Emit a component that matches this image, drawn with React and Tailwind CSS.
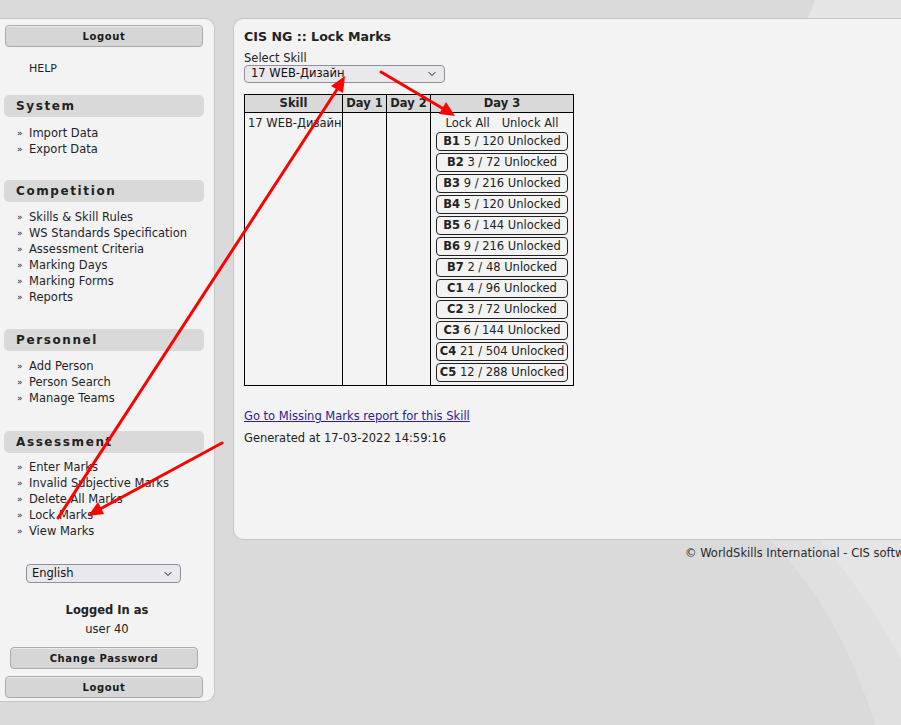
import React from 'react';
import { ChevronDown } from 'lucide-react';

const menu = [
    { title: 'System', items: ['Import Data', 'Export Data'] },
    { title: 'Competition', items: ['Skills & Skill Rules', 'WS Standards Specification', 'Assessment Criteria', 'Marking Days', 'Marking Forms', 'Reports'] },
    { title: 'Personnel', items: ['Add Person', 'Person Search', 'Manage Teams'] },
    { title: 'Assessment', items: ['Enter Marks', 'Invalid Subjective Marks', 'Delete All Marks', 'Lock Marks', 'View Marks'] },
];

const criteria = [
    ['B1', '5 / 120'], ['B2', '3 / 72'], ['B3', '9 / 216'], ['B4', '5 / 120'],
    ['B5', '6 / 144'], ['B6', '9 / 216'], ['B7', '2 / 48'], ['C1', '4 / 96'],
    ['C2', '3 / 72'], ['C3', '6 / 144'], ['C4', '21 / 504'], ['C5', '12 / 288'],
];

const GreyButton = ({ children, className = '' }) => (
    <div className={`h-[22px] flex items-center justify-center rounded-[4px] border border-[#ababab] bg-[#d6d6d6] text-[10px] font-bold tracking-[0.6px] text-[#1a1a1a] shadow-[inset_0_1px_0_#ececec] ${className}`}>
        {children}
    </div>
);

// grey title bar + list of "»" links
const Section = ({ title, items, mt, listMt }) => (
    <div className={mt}>
        <div className="ml-[4px] w-[200px] h-[22px] rounded-[5px] bg-[#d9d9d9] pl-[12px] flex items-center text-[12px] font-bold tracking-[1.6px] text-[#222]">
            {title}
        </div>
        <ul className={`${listMt} pl-[17px]`}>
            {items.map(item => (
                <li key={item} className="flex items-center h-[16px] text-[11.5px] text-[#1f1f2a]">
                    <span className="w-[12px] text-[9px]">»</span>{item}
                </li>
            ))}
        </ul>
    </div>
);

const Swooshes = () => (
    <svg className="absolute inset-0" width="901" height="725" viewBox="0 0 901 725">
        <path d="M 815 0 L 901 0 L 901 18 L 808 18 Z" fill="#ffffff" opacity="0.3" />
        <path d="M 770 540 Q 840 610 875 725 L 901 725 L 901 540 Z" fill="#ffffff" opacity="0.16" />
        <path d="M 820 540 Q 870 600 901 660 L 901 540 Z" fill="#ffffff" opacity="0.18" />
    </svg>
);

const Arrows = () => (
    <svg className="absolute inset-0 pointer-events-none" width="901" height="725" viewBox="0 0 901 725">
        <g stroke="#ff0000" strokeWidth="3" strokeLinecap="round">
            <line x1="222" y1="443" x2="100" y2="509" />
            <line x1="58" y1="518" x2="338" y2="88" />
            <line x1="381" y1="72" x2="442" y2="108" />
        </g>
        <g fill="#ff0000">
            <polygon points="88,516 98,502 104,514" />
            <polygon points="345,76 343,93 331,86" />
            <polygon points="455,116 439,114 446,102" />
        </g>
    </svg>
);

export default function App() {
    return (
        <div className="relative w-[901px] h-[725px] overflow-hidden bg-[#dadada] font-['DejaVu_Sans',Verdana,sans-serif] text-[#222]">
            <Swooshes />

            <div className="relative flex items-start pt-[18px] gap-[18px]">
                {/* left menu */}
                <aside className="w-[215px] h-[684px] shrink-0 rounded-r-[10px] border border-l-0 border-[#c6c6c6] bg-[#f3f3f3] flex flex-col">
                    <GreyButton className="mt-[6px] ml-[5px] w-[198px]">Logout</GreyButton>
                    <div className="mt-[14px] pl-[29px] h-[16px] flex items-center text-[11px] text-[#1f1f2a]">HELP</div>

                    <Section {...menu[0]} mt="mt-[18px]" listMt="mt-[9px]" />
                    <Section {...menu[1]} mt="mt-[22px]" listMt="mt-[8px]" />
                    <Section {...menu[2]} mt="mt-[23px]" listMt="mt-[8px]" />
                    <Section {...menu[3]} mt="mt-[24px]" listMt="mt-[7px]" />

                    <div className="mt-[24px] ml-[26px] w-[155px] h-[19px] rounded-[4px] border border-[#8f8f9d] bg-[#e9e9ed] flex items-center justify-between pl-[5px] pr-[6px] text-[11.5px] text-[#111]">
                        English
                        <ChevronDown size={12} strokeWidth={2} />
                    </div>

                    <div className="mt-[19px] text-center text-[11.5px] font-bold leading-[16px]">Logged In as</div>
                    <div className="mt-[3px] text-center text-[11.5px] leading-[16px]">user 40</div>

                    <GreyButton className="mt-[10px] ml-[10px] w-[188px]">Change Password</GreyButton>
                    <GreyButton className="mt-[7px] ml-[5px] w-[198px]">Logout</GreyButton>
                </aside>

                {/* main content */}
                <div className="w-[700px] shrink-0 flex flex-col">
                    <main className="h-[522px] rounded-l-[10px] border border-r-0 border-[#c6c6c6] bg-[#f3f3f3] pl-[10px] pt-[10px]">
                        <h1 className="text-[12.6px] font-bold leading-[16px]">CIS NG :: Lock Marks</h1>

                        <div className="mt-[6px] text-[11.5px] leading-[14px]">Select Skill</div>
                        <div className="w-[201px] h-[18px] rounded-[4px] border border-[#8f8f9d] bg-[#e9e9ed] flex items-center justify-between pl-[6px] pr-[6px] text-[11.5px] text-[#111]">
                            17 WEB-Дизайн
                            <ChevronDown size={12} strokeWidth={2} />
                        </div>

                        <table className="mt-[11px] table-fixed border-collapse border border-black text-[11.5px]">
                            <colgroup>
                                <col className="w-[98px]" />
                                <col className="w-[44px]" />
                                <col className="w-[44px]" />
                                <col className="w-[143px]" />
                            </colgroup>
                            <thead>
                                <tr className="h-[18px] bg-[#d9d9d9]">
                                    {['Skill', 'Day 1', 'Day 2', 'Day 3'].map(h => (
                                        <th key={h} className="border border-black p-0 font-bold leading-[15px]">{h}</th>
                                    ))}
                                </tr>
                            </thead>
                            <tbody>
                                <tr>
                                    <td className="border border-black align-top pt-[2px] pl-[3px] leading-[16px] whitespace-nowrap">17 WEB-Дизайн</td>
                                    <td className="border border-black" />
                                    <td className="border border-black" />
                                    <td className="border border-black align-top pt-[2px] pb-[3px]">
                                        <div className="flex justify-center gap-[12px] leading-[16px] text-[#1f1f2a]">
                                            <span>Lock All</span>
                                            <span>Unlock All</span>
                                        </div>
                                        <div className="mt-[1px] flex flex-col items-center gap-[2px]">
                                            {criteria.map(([code, count]) => (
                                                <div key={code} className="w-[132px] h-[19px] rounded-[4px] border border-[#222] flex items-center justify-center whitespace-nowrap">
                                                    <b>{code}</b>&nbsp;{count} Unlocked
                                                </div>
                                            ))}
                                        </div>
                                    </td>
                                </tr>
                            </tbody>
                        </table>

                        <a className="block mt-[22px] text-[11.5px] leading-[16px] text-[#2b1c94] underline">Go to Missing Marks report for this Skill</a>
                        <div className="mt-[6px] text-[11.5px] leading-[16px]">Generated at 17-03-2022 14:59:16</div>
                    </main>

                    <footer className="mt-[5px] pl-[452px] whitespace-nowrap text-[11.5px] leading-[16px] text-[#2a2a2a]">
                        © WorldSkills International - CIS software
                    </footer>
                </div>
            </div>

            <Arrows />
        </div>
    );
}
